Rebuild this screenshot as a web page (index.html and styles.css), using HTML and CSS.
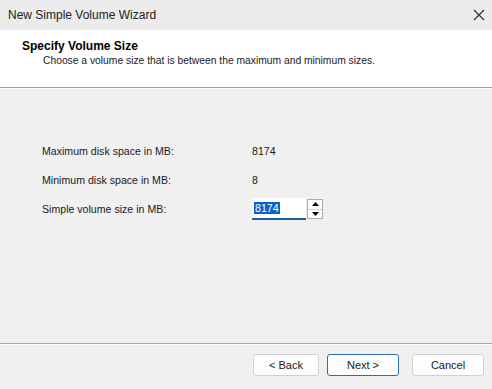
FILE: index.html
```html
<!DOCTYPE html>
<html lang="en">
<head>
  <meta charset="UTF-8">
  <title>New Simple Volume Wizard</title>
  <link rel="stylesheet" href="styles.css">
</head>
<body>
  <div class="window">
    <div class="titlebar">
      <span class="title">New Simple Volume Wizard</span>
      <svg class="close" width="12" height="12" viewBox="0 0 12 12"><path d="M1 1L11 11M11 1L1 11" stroke="#333" stroke-width="1.3" fill="none"/></svg>
    </div>
    <div class="header">
      <div class="h-title">Specify Volume Size</div>
      <div class="h-sub">Choose a volume size that is between the maximum and minimum sizes.</div>
    </div>
    <div class="content">
      <div class="row">
        <span class="lbl">Maximum disk space in MB:</span>
        <span class="val">8174</span>
      </div>
      <div class="row">
        <span class="lbl">Minimum disk space in MB:</span>
        <span class="val">8</span>
      </div>
      <div class="row">
        <span class="lbl">Simple volume size in MB:</span>
        <div class="spin">
          <div class="spin-input"><span class="sel">8174</span></div>
          <div class="spin-btns">
            <div class="sb"><svg width="7" height="4" viewBox="0 0 7 4"><path d="M0 4L3.5 0L7 4Z" fill="#000"/></svg></div>
            <div class="sb"><svg width="7" height="4" viewBox="0 0 7 4"><path d="M0 0L3.5 4L7 0Z" fill="#000"/></svg></div>
          </div>
        </div>
      </div>
    </div>
    <div class="footer">
      <button class="btn">&lt; Back</button>
      <button class="btn primary">Next &gt;</button>
      <button class="btn cancel">Cancel</button>
    </div>
  </div>
</body>
</html>
```

FILE: styles.css
```css
* { box-sizing: border-box; }
body { margin: 0; font-family: "Liberation Sans", Arial, sans-serif; font-size: 10.6px; color: #1a1a1a; background: #f0f0f0; }
.window { width: 492px; height: 389px; display: flex; flex-direction: column; }
.titlebar { height: 30px; background: #ebebeb; display: flex; align-items: center; justify-content: space-between; padding: 0 6px 0 8px; }
.title { font-size: 12px; color: #222; }
.close { margin-right: 1px; }
.header { height: 58px; background: #fff; padding: 9px 0 0 22px; border-bottom: 1px solid #a0a0a0; box-shadow: 0 1px 0 #fff; }
.h-title { font-weight: 700; font-size: 12px; color: #000; line-height: 15px; }
.h-sub { padding-left: 21px; line-height: 14px; color: #222; font-size: 10.3px; }
.content { flex: 1; padding: 53px 0 0 42px; border-bottom: 1px solid #a8a8a8; box-shadow: 0 1px 0 #fff; }
.row { display: flex; align-items: center; height: 20px; margin-bottom: 9px; }
.lbl { width: 210px; }
.spin { display: flex; align-items: center; }
.spin-input { width: 54px; height: 22px; background: #fff; border-bottom: 2px solid #1f5f9e; padding: 4px 0 0 2px; }
.sel { background: #0a64c8; color: #fff; padding: 0 1px; }
.spin-btns { display: flex; flex-direction: column; width: 16px; height: 20px; margin-left: 1px; border: 1px solid #adadad; background: #fdfdfd; }
.sb { flex: 1; display: flex; align-items: center; justify-content: center; }
.sb + .sb { border-top: 1px solid #d0d0d0; }
.footer { height: 45px; display: flex; align-items: center; justify-content: flex-end; padding: 0 8px 3px 0; }
.btn { font-family: inherit; font-size: 11px; width: 66px; height: 22px; margin-left: 8px; background: #fdfdfd; border: 1px solid #d0d0d0; border-radius: 3px; color: #1a1a1a; }
.btn.primary { width: 72px; border: 1px solid #2b6fb2; }
.btn.cancel { width: 72px; margin-left: 13px; }
```
